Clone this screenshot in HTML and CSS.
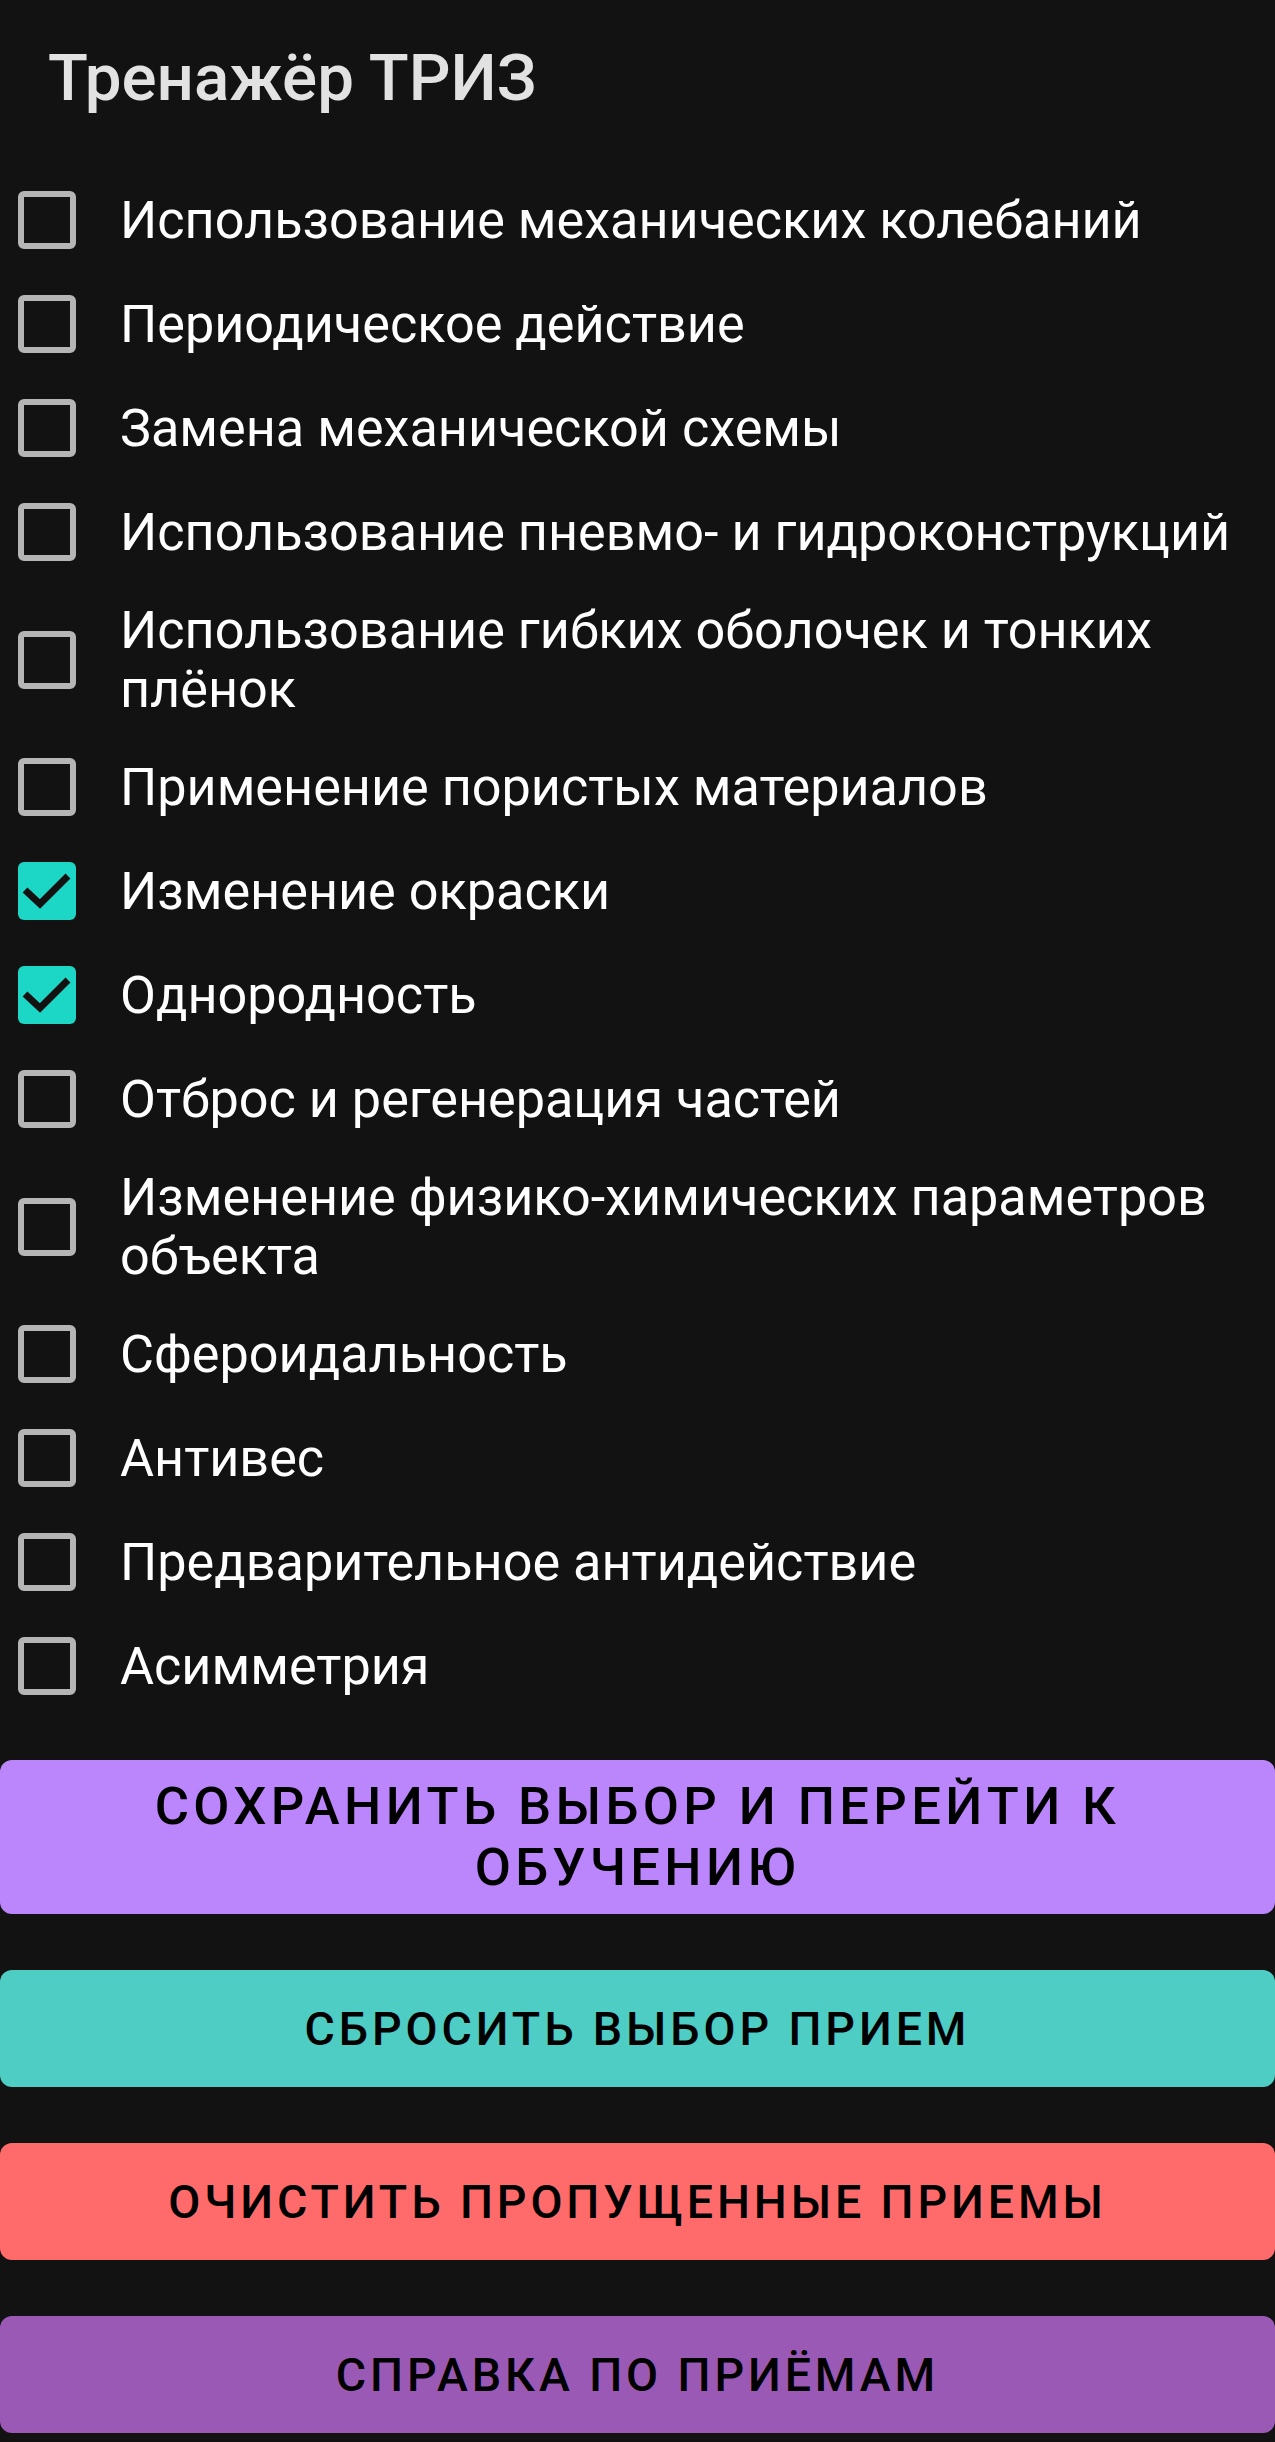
FILE: index.html
```html
<!DOCTYPE html>
<html lang="ru">
<head>
<meta charset="utf-8">
<title>Тренажёр ТРИЗ</title>
<link rel="stylesheet" href="styles.css">
</head>
<body>
<div class="app">
  <h1 class="title">Тренажёр ТРИЗ</h1>
  <ul class="options">
    <li class="option"><span class="box"></span><span class="label">Использование механических колебаний</span></li>
    <li class="option"><span class="box"></span><span class="label">Периодическое действие</span></li>
    <li class="option"><span class="box"></span><span class="label">Замена механической схемы</span></li>
    <li class="option"><span class="box"></span><span class="label">Использование пневмо- и гидроконструкций</span></li>
    <li class="option"><span class="box"></span><span class="label">Использование гибких оболочек и тонких плёнок</span></li>
    <li class="option"><span class="box"></span><span class="label">Применение пористых материалов</span></li>
    <li class="option"><span class="box checked"><svg class="tick" viewBox="0 0 58 58"><path d="M7 28 L22 42 L50 14"/></svg></span><span class="label">Изменение окраски</span></li>
    <li class="option"><span class="box checked"><svg class="tick" viewBox="0 0 58 58"><path d="M7 28 L22 42 L50 14"/></svg></span><span class="label">Однородность</span></li>
    <li class="option"><span class="box"></span><span class="label">Отброс и регенерация частей</span></li>
    <li class="option"><span class="box"></span><span class="label">Изменение физико-химических параметров объекта</span></li>
    <li class="option"><span class="box"></span><span class="label">Сфероидальность</span></li>
    <li class="option"><span class="box"></span><span class="label">Антивес</span></li>
    <li class="option"><span class="box"></span><span class="label">Предварительное антидействие</span></li>
    <li class="option"><span class="box"></span><span class="label">Асимметрия</span></li>
  </ul>
  <div class="actions">
    <button class="btn btn-save">Сохранить выбор и перейти к обучению</button>
    <button class="btn btn-reset">Сбросить выбор прием</button>
    <button class="btn btn-clear">Очистить пропущенные приемы</button>
    <button class="btn btn-help">Справка по приёмам</button>
  </div>
</div>
</body>
</html>
```
FILE: styles.css
```css
html, body {
  margin: 0;
  padding: 0;
  background: #121212;
}

body {
  font-family: Roboto, "Noto Sans", "Liberation Sans", sans-serif;
  color: #ffffff;
}

.app {
  width: 1275px;
  padding-top: 40px;
  padding-bottom: 12px;
}

.title {
  margin: 0 0 52px 48px;
  font-size: 65.5px;
  font-weight: 500;
  line-height: 76px;
  color: #e2e2e2;
}

.options {
  list-style: none;
  margin: 0;
  padding: 0 12px 0 0;
}

.option {
  display: flex;
  align-items: center;
  box-sizing: border-box;
  min-height: 104px;
  padding: 16.5px 0;
}

.box {
  flex: none;
  box-sizing: border-box;
  width: 58px;
  height: 58px;
  margin-left: 18px;
  border: 6.5px solid #b5b5b5;
  border-radius: 6px;
}

.box.checked {
  border: none;
  background: #1cd7c5;
}

.tick {
  display: block;
  width: 58px;
  height: 58px;
}

.tick path {
  fill: none;
  stroke: #121212;
  stroke-width: 7;
}

.label {
  margin-left: 44px;
  font-size: 52.2px;
  line-height: 59px;
  font-weight: 400;
}

.actions {
  display: flex;
  flex-direction: column;
  gap: 56px;
  margin-top: 42px;
}

.btn {
  display: block;
  width: 100%;
  box-sizing: border-box;
  min-height: 117px;
  padding: 17px 48px;
  border: none;
  border-radius: 12px;
  font-family: Roboto, "Noto Sans", "Liberation Sans", sans-serif;
  font-size: 46.5px;
  font-weight: 500;
  line-height: 60px;
  letter-spacing: 3.9px;
  text-transform: uppercase;
  text-align: center;
  color: #000000;
}

.btn-save {
  padding: 16px 40px;
  font-size: 52.5px;
  line-height: 61px;
  letter-spacing: 4.4px;
  background: #bb86fc;
}

.btn-reset { background: #4ecdc4; }
.btn-clear { background: #ff6b6b; }
.btn-help { background: #9b59b6; }
```
